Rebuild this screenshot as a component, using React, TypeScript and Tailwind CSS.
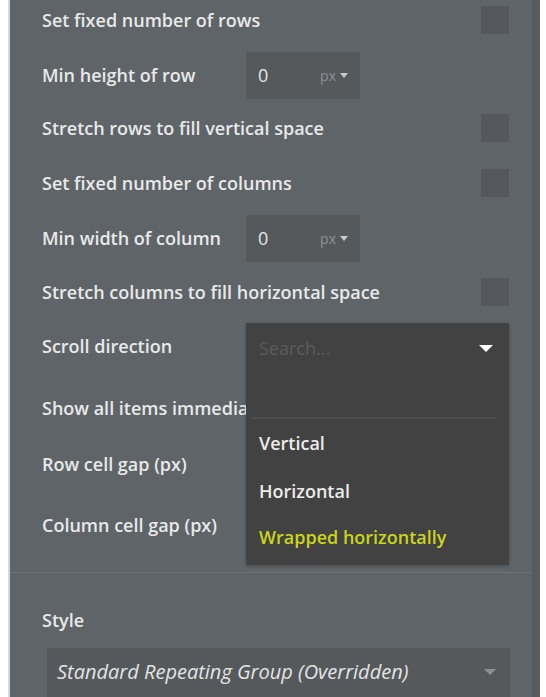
import { type ReactNode } from 'react'

const FONT = { fontFamily: '"Open Sans", "Liberation Sans", sans-serif' }

function Checkbox() {
  return <div className="h-[28px] w-[28px] shrink-0 bg-[#54585c]" />
}

function Label({ children }: { children: ReactNode }) {
  return (
    <div className="w-[204px] shrink-0 whitespace-nowrap text-[18px] font-semibold text-[#e9e9e9]">
      {children}
    </div>
  )
}

function Row({ label, mt }: { label: string; mt: string }) {
  return (
    <div className={`flex h-[40px] items-center ${mt}`}>
      <Label>{label}</Label>
    </div>
  )
}

function CheckRow({ label, mt }: { label: string; mt: string }) {
  return (
    <div className={`flex h-[40px] items-center pr-[23px] ${mt}`}>
      <div className="whitespace-nowrap text-[18px] font-semibold text-[#e9e9e9]">{label}</div>
      <div className="ml-auto">
        <Checkbox />
      </div>
    </div>
  )
}

function InputRow({ label, mt }: { label: string; mt: string }) {
  return (
    <div className={`flex h-[40px] items-center ${mt}`}>
      <Label>{label}</Label>
      <div className="flex h-[47px] w-[114px] shrink-0 items-center bg-[#55595c] pl-[12px] pr-[12px]">
        <span className="text-[18px] text-[#e6e6e6]">0</span>
        <span className="ml-auto text-[14px] text-[#8d9195]">px</span>
        <svg width="8" height="5" viewBox="0 0 8 5" className="ml-[4px]">
          <path d="M0 0h8L4 5z" fill="#c8cbce" />
        </svg>
      </div>
    </div>
  )
}

function ScrollMenu() {
  return (
    <div className="absolute left-[236px] top-[323px] h-[242px] w-[263px] bg-[#424242] shadow-[0_1px_3px_rgba(0,0,0,0.25)]">
      <div className="flex h-[50px] items-center pl-[13px] pr-[16px]">
        <span className="text-[18px] text-[#5b5b5b]">Search...</span>
        <svg width="14" height="7" viewBox="0 0 14 7" className="ml-auto">
          <path d="M0 0h14L7 7z" fill="#ffffff" />
        </svg>
      </div>
      <div className="ml-[5px] mr-[13px] mt-[44px] h-[2px] bg-[#4d4d4d]" />
      <div className="pl-[13px] pt-[12px] text-[18px] font-semibold leading-[24px]">
        <div className="text-[#ececec]">Vertical</div>
        <div className="mt-[24px] text-[#ececec]">Horizontal</div>
        <div className="mt-[22px] text-[#c9d51d]">Wrapped horizontally</div>
      </div>
    </div>
  )
}

export default function App() {
  return (
    <div className="flex h-[697px] w-[546px] overflow-hidden bg-white" style={FONT}>
      <div className="w-[8px] shrink-0 bg-white" />
      <div className="w-[2px] shrink-0 bg-[#d6d7d8]" />
      <div className="relative flex flex-1 flex-col bg-[#5f6468]">
        <div className="pl-[32px]">
          <CheckRow label="Set fixed number of rows" mt="mt-0" />
          <InputRow label="Min height of row" mt="mt-[15px]" />
          <CheckRow label="Stretch rows to fill vertical space" mt="mt-[13px]" />
          <CheckRow label="Set fixed number of columns" mt="mt-[15px]" />
          <InputRow label="Min width of column" mt="mt-[15px]" />
          <CheckRow label="Stretch columns to fill horizontal space" mt="mt-[14px]" />
          <Row label="Scroll direction" mt="mt-[14px]" />
          <Row label="Show all items immediately" mt="mt-[22px]" />
          <Row label="Row cell gap (px)" mt="mt-[16px]" />
          <Row label="Column cell gap (px)" mt="mt-[21px]" />
        </div>
        <div className="mt-[27px] h-px bg-[#6b7074]" />
        <div className="pl-[32px]">
          <div className="mt-[28px] flex h-[40px] items-center text-[18px] font-semibold text-[#e9e9e9]">
            Style
          </div>
        </div>
        <div className="ml-[37px] mr-[22px] mt-[7px] flex h-[56px] items-center bg-[#55595c] pl-[10px] pr-[14px]">
          <span className="whitespace-nowrap text-[20px] italic text-[#e4e4e4]">
            Standard Repeating Group (Overridden)
          </span>
          <svg width="12" height="6" viewBox="0 0 12 6" className="ml-auto">
            <path d="M0 0h12L6 6z" fill="#8d9195" />
          </svg>
        </div>
        <ScrollMenu />
      </div>
      <div className="w-[8px] shrink-0 bg-[#565b5f]" />
      <div className="w-[6px] shrink-0 bg-white" />
    </div>
  )
}
